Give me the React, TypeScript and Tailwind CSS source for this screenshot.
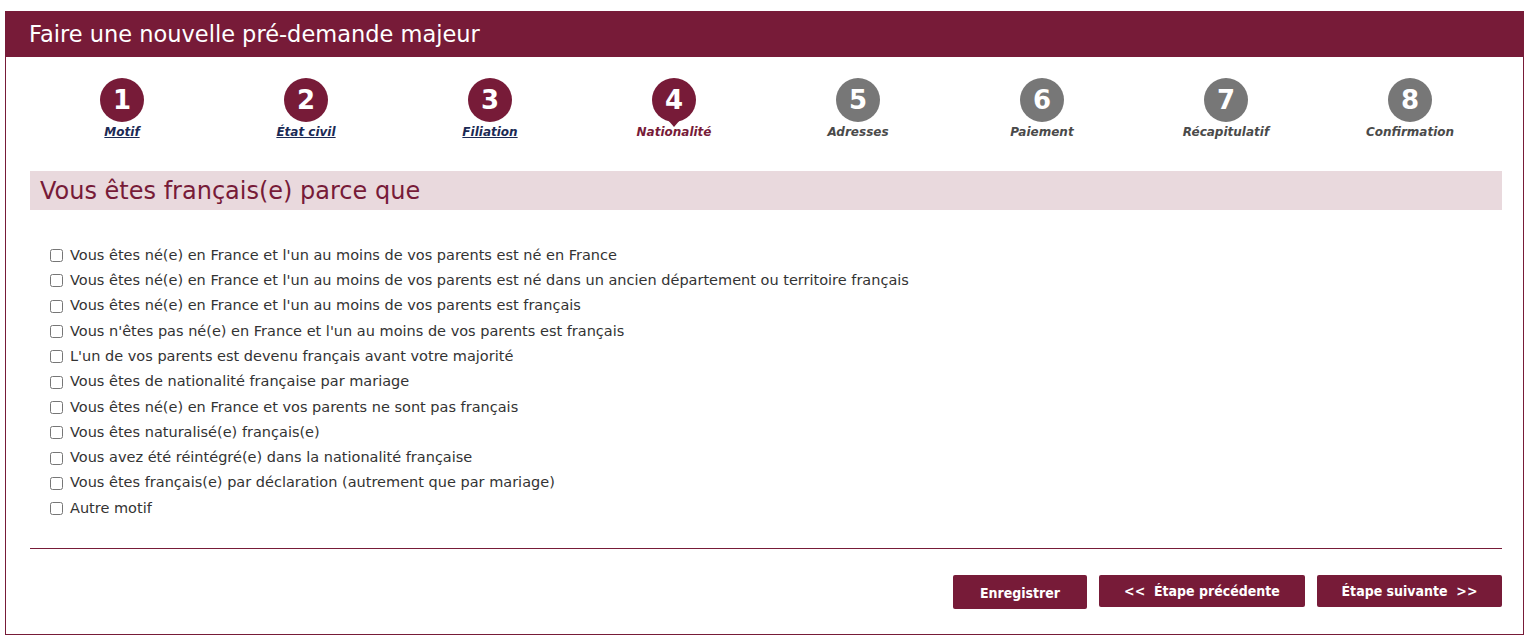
import React from "react";

const STEPS = [
  { n: 1, label: "Motif", state: "done" },
  { n: 2, label: "État civil", state: "done" },
  { n: 3, label: "Filiation", state: "done" },
  { n: 4, label: "Nationalité", state: "current" },
  { n: 5, label: "Adresses", state: "todo" },
  { n: 6, label: "Paiement", state: "todo" },
  { n: 7, label: "Récapitulatif", state: "todo" },
  { n: 8, label: "Confirmation", state: "todo" },
];

const MOTIFS = [
  "Vous êtes né(e) en France et l'un au moins de vos parents est né en France",
  "Vous êtes né(e) en France et l'un au moins de vos parents est né dans un ancien département ou territoire français",
  "Vous êtes né(e) en France et l'un au moins de vos parents est français",
  "Vous n'êtes pas né(e) en France et l'un au moins de vos parents est français",
  "L'un de vos parents est devenu français avant votre majorité",
  "Vous êtes de nationalité française par mariage",
  "Vous êtes né(e) en France et vos parents ne sont pas français",
  "Vous êtes naturalisé(e) français(e)",
  "Vous avez été réintégré(e) dans la nationalité française",
  "Vous êtes français(e) par déclaration (autrement que par mariage)",
  "Autre motif",
];

function Step({ n, label, state }: { n: number; label: string; state: string }) {
  const circle = state === "todo" ? "bg-[#777777]" : "bg-[#771b38]";
  const text =
    state === "done"
      ? "text-[#1b2a55] underline"
      : state === "current"
      ? "text-[#771b38]"
      : "text-[#4a4a4a]";
  return (
    <div className="flex flex-col items-center">
      <div className="relative">
        <div className={`${circle} w-[44px] h-[44px] rounded-full flex items-center justify-center text-white text-[26px] font-black leading-none`}>
          {n}
        </div>
        {state === "current" && (
          <div className="absolute left-1/2 -translate-x-1/2 bottom-[-5px] w-0 h-0 border-l-[6px] border-r-[6px] border-t-[7px] border-l-transparent border-r-transparent border-t-[#771b38]" />
        )}
      </div>
      <span className={`${text} mt-[1px] text-[12px] font-bold italic`}>{label}</span>
    </div>
  );
}

export default function App() {
  return (
    <div className="bg-white w-[1529px] h-[635px] pt-[11px] px-[5px] font-['DejaVu_Sans',Verdana,sans-serif]">
      <div className="border border-[#771b38] h-[624px] flex flex-col">
        <div className="bg-[#771b38] h-[45px] flex items-center pl-[23px]">
          <h1 className="text-white text-[22.5px]">Faire une nouvelle pré-demande majeur</h1>
        </div>

        <div className="pl-[24px] pr-[21px]">
          <div className="grid grid-cols-8 mt-[21px]">
            {STEPS.map((s) => (
              <Step key={s.n} {...s} />
            ))}
          </div>

          <div className="mt-[30px] bg-[#e9d9dd] h-[39px] flex items-center pl-[10px]">
            <h2 className="text-[#771b38] text-[24px]">Vous êtes français(e) parce que</h2>
          </div>

          <div className="mt-[33px] pl-[20px] flex flex-col">
            {MOTIFS.map((m) => (
              <label key={m} className="flex items-center h-[25.3px] text-[14.5px] text-[#333333]">
                <input type="checkbox" className="w-[13px] h-[13px] mr-[7px] accent-[#771b38]" />
                {m}
              </label>
            ))}
          </div>

          <div className="mt-[27px] h-px bg-[#771b38]" />

          <div className="flex justify-end gap-[12px] mt-[26px] font-['DejaVu_Sans_Condensed',Tahoma,sans-serif]">
            <button className="bg-[#771b38] text-white font-bold text-[14px] w-[134px] h-[34px] rounded-[2px] pt-[2px]">
              Enregistrer
            </button>
            <button className="bg-[#771b38] text-white font-bold text-[14px] w-[206px] h-[32px] rounded-[2px]">
              &lt;&lt;&nbsp; Étape précédente
            </button>
            <button className="bg-[#771b38] text-white font-bold text-[14px] w-[185px] h-[32px] rounded-[2px]">
              Étape suivante&nbsp; &gt;&gt;
            </button>
          </div>
        </div>
      </div>
    </div>
  );
}
